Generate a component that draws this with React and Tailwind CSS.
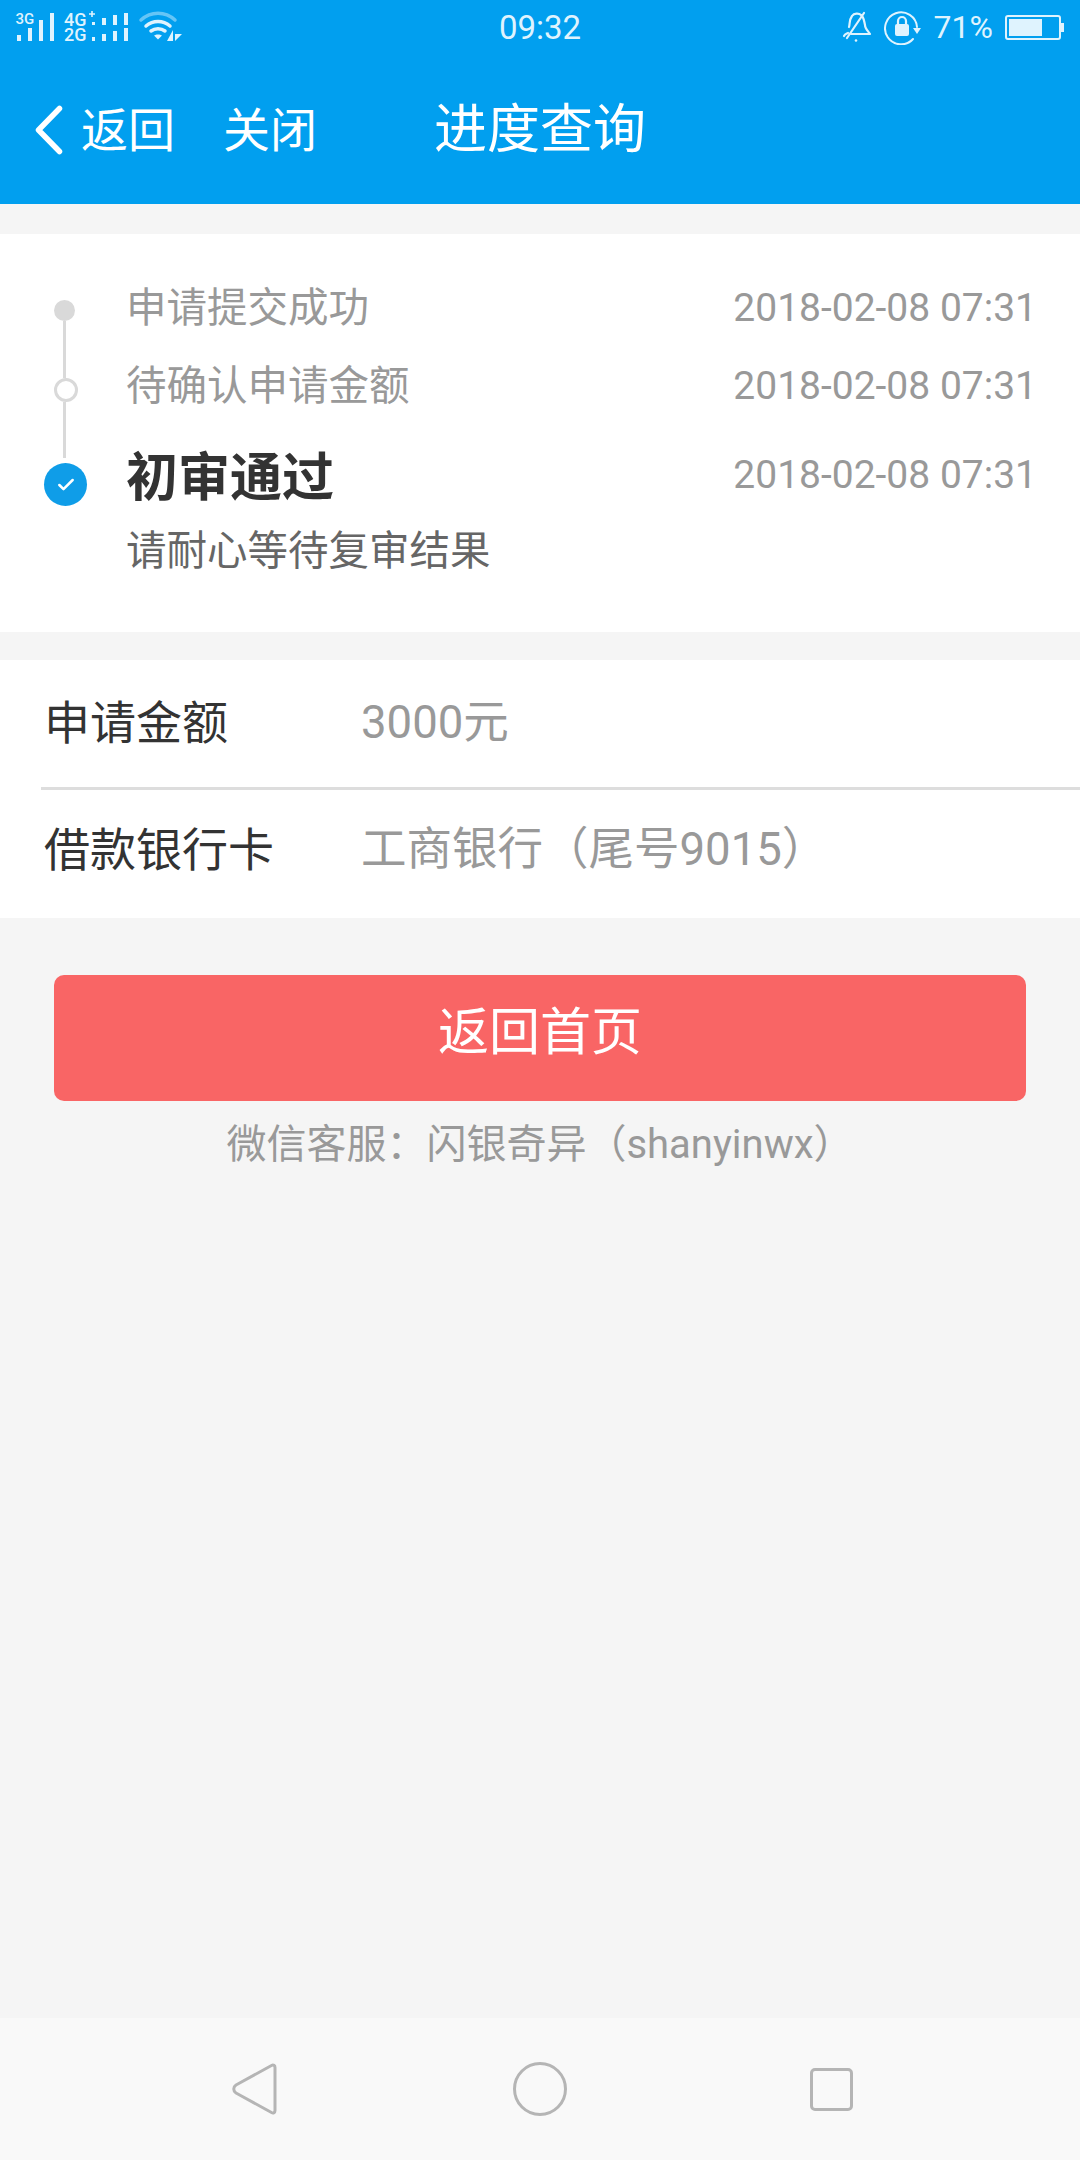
import { Check } from 'lucide-react';

// Signal bars and wifi at the left of the status bar
const SignalIcons = () => (
  <svg width="190" height="54" viewBox="0 0 190 54" className="block text-[#dff3fe]">
    <g fill="currentColor" fontFamily="Roboto, sans-serif" fontWeight="500">
      <text x="15.500" y="23.500" fontSize="15">3G</text>
      <text x="64" y="25.500" fontSize="18">4G</text>
      <text x="64" y="41" fontSize="18">2G</text>
      {/* first sim */}
      <rect x="17" y="35" width="4" height="6" />
      <rect x="28" y="28" width="4" height="13" />
      <rect x="39" y="20" width="4" height="21" />
      <rect x="50" y="13" width="4" height="28" />
      {/* second sim, upper row */}
      <path d="M89 14h6M92 11v6" stroke="currentColor" strokeWidth="1.600" />
      <rect x="92" y="22" width="3" height="3" />
      <rect x="102" y="18" width="4" height="7" />
      <rect x="113" y="15" width="4" height="10" />
      <rect x="124" y="13" width="4" height="12" />
      {/* second sim, lower row */}
      <rect x="92" y="37" width="3" height="4" />
      <rect x="102" y="34" width="4" height="7" />
      <rect x="113" y="31" width="4" height="10" />
      <rect x="124" y="28" width="4" height="13" />
      {/* data arrows */}
      <path d="M173 30v11h-6zM175 30v11l7-7h-7z" />
    </g>
    <g fill="none" stroke="currentColor" strokeLinecap="round">
      <path d="M141 20c10-9 24-9 34 0" strokeWidth="3.500" opacity="0.45" />
      <path d="M146 26c7-6 17-6 24 0" strokeWidth="3.500" />
      <path d="M151 31c4-3 10-3 14 0" strokeWidth="3.500" />
    </g>
    <path d="M154 35.500c2-1.500 6-1.500 8 0l-4 4z" fill="currentColor" />
  </svg>
);

const BellOffIcon = () => (
  <svg width="30" height="32" viewBox="0 0 30 32" fill="none" stroke="currentColor" strokeWidth="2.200" strokeLinecap="round" strokeLinejoin="round">
    <path d="M7 16c1-3 0-7 3-11 2-3 7-3 9-1 3 2 3 6 4 10 0 4 4 7 5 9H9" />
    <path d="M5 27 22 2" />
    <path d="M6 22c-2 1-3 1-4 3" />
    <circle cx="14" cy="29.500" r="1.300" fill="currentColor" stroke="none" />
  </svg>
);

const RotationLockIcon = () => (
  <svg width="38" height="36" viewBox="0 0 38 36" fill="none" stroke="currentColor" strokeWidth="2" strokeLinecap="round">
    <path d="M33 18a16 16 0 1 0-4 12" />
    <path d="M29 19h8l-4 6z" fill="currentColor" stroke="none" />
    <rect x="11" y="15" width="14" height="12" rx="2" fill="currentColor" stroke="none" />
    <path d="M14 15v-3a4 4 0 0 1 8 0v3" strokeWidth="2.200" />
  </svg>
);

const Battery = () => (
  <div className="flex items-center">
    <div className="w-[56px] h-[25px] rounded-[3px] border-2 border-[#dff3fe] p-[2px]">
      <div className="h-full w-[33px] bg-[#dff3fe]" />
    </div>
    <div className="w-[3px] h-[9px] bg-[#dff3fe]" />
  </div>
);

const StatusBar = () => (
  <div className="grid grid-cols-[1fr_auto_1fr] h-[54px] items-center text-[32px] text-[#dff3fe]">
    <div className="flex">
      <SignalIcons />
    </div>
    <div className="text-[33px] leading-none">09:32</div>
    <div className="flex items-center justify-end pr-[16px]">
      <div className="mr-[12px] flex">
        <BellOffIcon />
      </div>
      <div className="mr-[12px] flex">
        <RotationLockIcon />
      </div>
      <div className="mr-[12px] leading-none">71%</div>
      <Battery />
    </div>
  </div>
);

const Header = () => (
  <header className="bg-[#019fef] h-[204px] text-white">
    <StatusBar />
    <div className="grid grid-cols-[1fr_auto_1fr] items-center h-[150px] pt-[2px]">
      <div className="flex items-center pl-[35px]">
        <svg width="28" height="50" viewBox="0 0 28 50" fill="none" stroke="currentColor" strokeWidth="5.500" strokeLinecap="round" strokeLinejoin="round">
          <path d="M24.500 3.500 3.500 25l21 21.500" />
        </svg>
        <span className="ml-[18px] text-[47px] leading-none">返回</span>
        <span className="ml-[48px] text-[47px] leading-none">关闭</span>
      </div>
      <h1 className="text-[53px] leading-none font-normal">进度查询</h1>
      <div />
    </div>
  </header>
);

// Timeline rail with the three dots
const Rail = () => (
  <div className="w-[43px] flex flex-col items-center pt-[66px]">
    <div className="w-[21px] h-[21px] rounded-full bg-[#d9d9d9] -ml-[3px]" />
    <div className="w-[3px] h-[57px] bg-[#d9d9d9] -ml-[3px]" />
    <div className="w-[24px] h-[24px] rounded-full border-[3px] border-[#d9d9d9]" />
    <div className="w-[3px] h-[56px] bg-[#d9d9d9] -ml-[3px]" />
    <div className="mt-[5px] w-[43px] h-[43px] rounded-full bg-[#0f9de8] flex items-center justify-center">
      <Check size={20} strokeWidth={3} className="text-white" />
    </div>
  </div>
);

const StepRow = ({ title, time, className }) => (
  <div className={`flex items-center justify-between ${className}`}>
    <span className="text-[40.500px] text-[#999999] leading-none">{title}</span>
    <span className="text-[39px] text-[#999999] leading-none">{time}</span>
  </div>
);

const Timeline = () => (
  <section className="mt-[30px] h-[398px] bg-white flex pl-[44px] pr-[43px]">
    <Rail />
    <div className="flex-1 ml-[39px] pt-[35px]">
      <StepRow title="申请提交成功" time="2018-02-08 07:31" className="h-[78px]" />
      <StepRow title="待确认申请金额" time="2018-02-08 07:31" className="h-[78px]" />
      <div className="flex justify-between mt-[24px] h-[60px]">
        <span className="text-[52px] font-bold text-[#333333] leading-[60px]">初审通过</span>
        <span className="text-[39px] text-[#999999] leading-[52px]">2018-02-08 07:31</span>
      </div>
      <div className="mt-[22px] text-[40.500px] leading-[40px] text-[#666666]">请耐心等待复审结果</div>
    </div>
  </section>
);

const InfoRow = ({ label, value, className }) => (
  <div className={`flex items-center pl-[44px] ${className}`}>
    <span className="w-[317px] text-[46px] leading-none text-[#333333]">{label}</span>
    <span className="text-[45.500px] leading-none text-[#999999]">{value}</span>
  </div>
);

const BottomNav = () => (
  <nav className="h-[142px] bg-[#f9f9f9] grid grid-cols-3 items-center text-[#b5b5b5]">
    <svg width="60" height="60" viewBox="0 0 60 60" fill="none" stroke="currentColor" strokeWidth="3" strokeLinejoin="round" className="ml-[224px]">
      <path d="M12 26 47.500 6.500c2-1 3.500 0 3.500 2v43c0 2-1.500 3-3.500 2L12 34c-3-2-3-6 0-8z" />
    </svg>
    <div className="w-[54px] h-[54px] rounded-full border-[3px] border-[#b5b5b5] justify-self-center" />
    <div className="w-[43px] h-[43px] rounded-[5px] border-[3px] border-[#b5b5b5] justify-self-end mr-[227px]" />
  </nav>
);

const App = () => {
  return (
    <div className="h-screen flex flex-col bg-[#f5f5f5] font-['Roboto','Noto_Sans_CJK_SC',sans-serif]">
      <Header />
      <main className="flex-1">
        <Timeline />
        <section className="mt-[28px] bg-white h-[258px]">
          <InfoRow label="申请金额" value="3000元" className="h-[124px] pt-[1px]" />
          <div className="mt-[3px] ml-[41px] h-[3px] bg-[#dddddd]" />
          <InfoRow label="借款银行卡" value="工商银行（尾号9015）" className="h-[120px]" />
        </section>
        <div className="px-[54px] pt-[57px]">
          <button className="w-full h-[126px] rounded-[10px] bg-[#f96565] text-white text-[51px] leading-none pb-[12px]">
            返回首页
          </button>
          <p className="mt-[22px] text-center text-[40px] leading-[44px] text-[#999999]">微信客服：闪银奇异（shanyinwx）</p>
        </div>
      </main>
      <BottomNav />
    </div>
  );
};

export default App;
